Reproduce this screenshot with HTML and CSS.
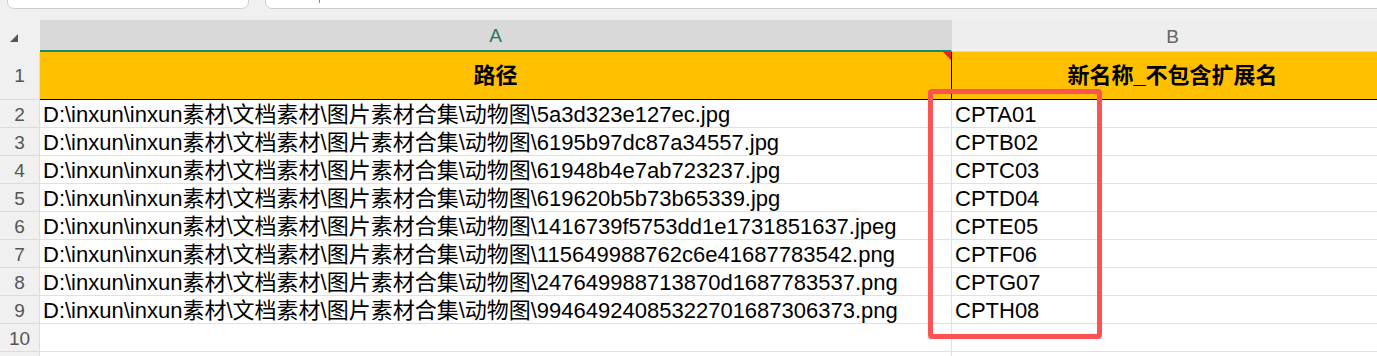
FILE: index.html
```html
<!DOCTYPE html>
<html lang="zh">
<head>
<meta charset="utf-8">
<link rel="stylesheet" href="styles.css">
</head>
<body>
<div class="page">
  <div class="topbar">
    <div class="namebox"></div>
    <div class="formulabox"><span class="fxmark"></span></div>
  </div>
  <div class="sheet">
    <div class="corner"><span class="tri"></span></div>
    <div class="colhead sel">A</div>
    <div class="colhead">B</div>

    <div class="rowhead r1">1</div>
    <div class="cell hdr hdr-a">路径<span class="note"></span></div>
    <div class="cell hdr">新名称_不包含扩展名</div>

    <div class="rowhead">2</div>
    <div class="cell">D:\inxun\inxun素材\文档素材\图片素材合集\动物图\5a3d323e127ec.jpg</div>
    <div class="cell">CPTA01</div>

    <div class="rowhead">3</div>
    <div class="cell">D:\inxun\inxun素材\文档素材\图片素材合集\动物图\6195b97dc87a34557.jpg</div>
    <div class="cell">CPTB02</div>

    <div class="rowhead">4</div>
    <div class="cell">D:\inxun\inxun素材\文档素材\图片素材合集\动物图\61948b4e7ab723237.jpg</div>
    <div class="cell">CPTC03</div>

    <div class="rowhead">5</div>
    <div class="cell">D:\inxun\inxun素材\文档素材\图片素材合集\动物图\619620b5b73b65339.jpg</div>
    <div class="cell">CPTD04</div>

    <div class="rowhead">6</div>
    <div class="cell">D:\inxun\inxun素材\文档素材\图片素材合集\动物图\1416739f5753dd1e1731851637.jpeg</div>
    <div class="cell">CPTE05</div>

    <div class="rowhead">7</div>
    <div class="cell">D:\inxun\inxun素材\文档素材\图片素材合集\动物图\115649988762c6e41687783542.png</div>
    <div class="cell">CPTF06</div>

    <div class="rowhead">8</div>
    <div class="cell">D:\inxun\inxun素材\文档素材\图片素材合集\动物图\247649988713870d1687783537.png</div>
    <div class="cell">CPTG07</div>

    <div class="rowhead">9</div>
    <div class="cell">D:\inxun\inxun素材\文档素材\图片素材合集\动物图\99464924085322701687306373.png</div>
    <div class="cell">CPTH08</div>

    <div class="rowhead">10</div>
    <div class="cell"></div>
    <div class="cell"></div>

    <div class="rowhead"></div>
    <div class="cell"></div>
    <div class="cell"></div>

    <div class="highlight"></div>
  </div>
</div>
</body>
</html>
```

FILE: styles.css
```css
* { box-sizing: border-box; margin: 0; padding: 0; }
html, body { width: 1377px; height: 356px; overflow: hidden; background: #ffffff; }
body { font-family: "Liberation Sans", "Noto Sans CJK SC", sans-serif; }
.page { width: 1377px; height: 356px; overflow: hidden; }

.topbar {
  height: 20px;
  background: #f0f0f0;
  display: flex;
  gap: 16px;
  padding-left: 7px;
}
.namebox, .formulabox {
  margin-top: -10px;
  height: 19px;
  background: #ffffff;
  border: 1px solid #cfcfcf;
  border-radius: 7px;
}
.namebox { width: 242px; }
.formulabox { flex: 1; margin-right: -10px; padding-left: 53px; }
.fxmark {
  display: block;
  margin-top: 9px;
  width: 1px;
  height: 3px;
  background: #8a8a8a;
}

.sheet {
  position: relative;
  display: grid;
  grid-template-columns: 40px 912px 442px;
  grid-template-rows: 32px 48px repeat(10, 28px);
  width: 1394px;
}

.corner {
  background: #f0f0f0;
  position: relative;
}
.tri {
  position: absolute;
  left: 10px;
  top: 14px;
  width: 0; height: 0;
  border-left: 8px solid transparent;
  border-bottom: 8px solid #555;
}
.colhead {
  background: #eeeeee;
  color: #666;
  font-family: "Liberation Sans", sans-serif;
  font-size: 19px;
  display: flex;
  align-items: center;
  justify-content: center;
  border-right: 1px solid #dcdcdc;
  border-bottom: 1px solid #dcdcdc;
  padding-top: 2px;
}
.colhead.sel {
  background: #d9d9d9;
  color: #1f7a5c;
  border-bottom: 2px solid #1e8a63;
  border-right: 1px solid #d9d9d9;
}

.rowhead {
  background: #f0f0f0;
  color: #555;
  font-family: "Liberation Sans", sans-serif;
  font-size: 19px;
  display: flex;
  align-items: center;
  justify-content: center;
  padding-top: 2px;
  border-bottom: 1px solid #dcdcdc;
  border-right: 1px solid #dcdcdc;
}
.rowhead.r1 { padding-top: 0; }

.cell {
  font-size: 22px;
  line-height: 26px;
  padding-top: 2px;
  color: #000;
  white-space: nowrap;
  overflow: hidden;
  padding-left: 3px;
  border-right: 1px solid #e1e1e1;
  border-bottom: 1px solid #e1e1e1;
}
.cell.hdr {
  background: #ffc000;
  font-weight: bold;
  text-align: center;
  line-height: 47px;
  padding-top: 0;
  border-right: 1px solid #000;
  border-bottom: 1px solid #000;
  padding-left: 0;
}
.hdr-a { position: relative; }
.note {
  position: absolute;
  right: 0;
  top: 0;
  width: 0; height: 0;
  border-left: 8px solid transparent;
  border-top: 8px solid #e8211b;
}

.highlight {
  position: absolute;
  left: 928px;
  top: 69px;
  width: 174px;
  height: 250px;
  border: 5px solid #fd5453;
  border-radius: 4px;
  pointer-events: none;
}
```
